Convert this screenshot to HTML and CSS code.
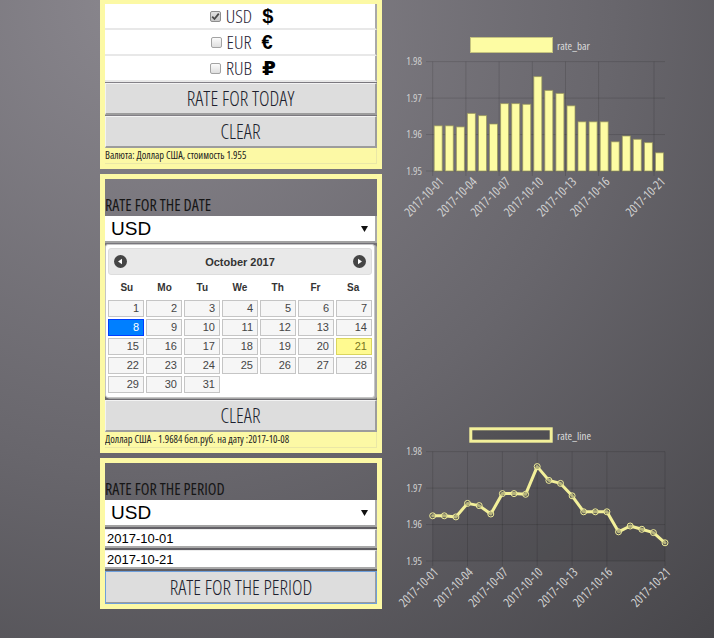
FILE: index.html
```html
<!DOCTYPE html>
<html lang="ru">
<head>
<meta charset="utf-8">
<title>Rates</title>
<link rel="stylesheet" href="styles.css">
</head>
<body>
<div class="page">
  <div class="left">
    <section class="panel panel-today">
      <div class="cur-row">
        <span class="cb cb-checked"><svg viewBox="0 0 11 11" width="11" height="11"><path d="M2.2 5.6 L4.5 8 L8.8 2.6" fill="none" stroke="#4a4a4a" stroke-width="1.8"/></svg></span>
        <span class="cur-code">USD</span><span class="cur-sym">$</span>
      </div>
      <div class="cur-row">
        <span class="cb"></span>
        <span class="cur-code">EUR</span><span class="cur-sym">€</span>
      </div>
      <div class="cur-row">
        <span class="cb"></span>
        <span class="cur-code">RUB</span><span class="cur-sym">₽</span>
      </div>
      <button class="btn">RATE FOR TODAY</button>
      <button class="btn">CLEAR</button>
      <div class="info">Валюта: Доллар США, стоимость 1.955</div>
    </section>

    <section class="panel">
      <div class="panel-title">RATE FOR THE DATE</div>
      <div class="select"><span>USD</span><svg class="caret" viewBox="0 0 7 6" width="7" height="6"><path d="M0 0 H7 L3.5 6 Z" fill="#111"/></svg></div>
      <div class="dp">
        <div class="dp-head">
          <svg class="dp-nav" viewBox="0 0 13 13" width="13" height="13"><circle cx="6.5" cy="6.5" r="6.5" fill="#454545"/><path d="M4 6.5 L8 3.8 V9.2 Z" fill="#fff"/></svg>
          <span class="dp-title">October 2017</span>
          <svg class="dp-nav" viewBox="0 0 13 13" width="13" height="13"><circle cx="6.5" cy="6.5" r="6.5" fill="#454545"/><path d="M9 6.5 L5 3.8 V9.2 Z" fill="#fff"/></svg>
        </div>
        <div class="dp-days"><span>Su</span><span>Mo</span><span>Tu</span><span>We</span><span>Th</span><span>Fr</span><span>Sa</span></div>
        <div class="dp-grid">
          <span class="dp-cell">1</span><span class="dp-cell">2</span><span class="dp-cell">3</span><span class="dp-cell">4</span><span class="dp-cell">5</span><span class="dp-cell">6</span><span class="dp-cell">7</span>
          <span class="dp-cell dp-active">8</span><span class="dp-cell">9</span><span class="dp-cell">10</span><span class="dp-cell">11</span><span class="dp-cell">12</span><span class="dp-cell">13</span><span class="dp-cell">14</span>
          <span class="dp-cell">15</span><span class="dp-cell">16</span><span class="dp-cell">17</span><span class="dp-cell">18</span><span class="dp-cell">19</span><span class="dp-cell">20</span><span class="dp-cell dp-today">21</span>
          <span class="dp-cell">22</span><span class="dp-cell">23</span><span class="dp-cell">24</span><span class="dp-cell">25</span><span class="dp-cell">26</span><span class="dp-cell">27</span><span class="dp-cell">28</span>
          <span class="dp-cell">29</span><span class="dp-cell">30</span><span class="dp-cell">31</span>
        </div>
      </div>
      <button class="btn btn-clear2">CLEAR</button>
      <div class="info">Доллар США - 1.9684 бел.руб. на дату :2017-10-08</div>
    </section>

    <section class="panel">
      <div class="panel-title">RATE FOR THE PERIOD</div>
      <div class="select"><span>USD</span><svg class="caret" viewBox="0 0 7 6" width="7" height="6"><path d="M0 0 H7 L3.5 6 Z" fill="#111"/></svg></div>
      <input class="date-input" type="text" value="2017-10-01">
      <input class="date-input" type="text" value="2017-10-21">
      <button class="btn btn-focus">RATE FOR THE PERIOD</button>
    </section>
  </div>

  <div class="charts">
    <svg class="chart" width="300" height="200" viewBox="390 30 300 200">
      <rect x="470.5" y="37.5" width="82" height="15" class="bar-legend"/>
      <text x="557" y="49.5" class="legend-text">rate_bar</text>
      <g class="grid">
        <line x1="426" y1="61.65" x2="665" y2="61.65"/>
        <line x1="426" y1="98.1" x2="665" y2="98.1"/>
        <line x1="426" y1="134.55" x2="665" y2="134.55"/>
        <line x1="426" y1="171" x2="665" y2="171"/>
        <line x1="432.7" y1="61.65" x2="432.7" y2="176"/>
        <line x1="465.9" y1="61.65" x2="465.9" y2="176"/>
        <line x1="499.1" y1="61.65" x2="499.1" y2="176"/>
        <line x1="532.3" y1="61.65" x2="532.3" y2="176"/>
        <line x1="565.5" y1="61.65" x2="565.5" y2="176"/>
        <line x1="598.6" y1="61.65" x2="598.6" y2="176"/>
        <line x1="654" y1="61.65" x2="654" y2="176"/>
      </g>
      <g class="ylabels">
        <text x="422" y="65.3">1.98</text>
        <text x="422" y="101.8">1.97</text>
        <text x="422" y="138.2">1.96</text>
        <text x="422" y="174.7">1.95</text>
      </g>
      <g class="bars">
        <rect x="434.2" y="125.8" width="8" height="45.2"/>
        <rect x="445.3" y="125.8" width="8" height="45.2"/>
        <rect x="456.4" y="126.9" width="8" height="44.1"/>
        <rect x="467.4" y="113.4" width="8" height="57.6"/>
        <rect x="478.5" y="115.6" width="8" height="55.4"/>
        <rect x="489.5" y="124" width="8" height="47"/>
        <rect x="500.6" y="103.6" width="8" height="67.4"/>
        <rect x="511.7" y="103.6" width="8" height="67.4"/>
        <rect x="522.7" y="104.3" width="8" height="66.7"/>
        <rect x="533.8" y="76.6" width="8" height="94.4"/>
        <rect x="544.8" y="90.4" width="8" height="80.6"/>
        <rect x="555.9" y="93.4" width="8" height="77.6"/>
        <rect x="567" y="105.8" width="8" height="65.2"/>
        <rect x="578" y="121.8" width="8" height="49.2"/>
        <rect x="589.1" y="121.8" width="8" height="49.2"/>
        <rect x="600.2" y="121.8" width="8" height="49.2"/>
        <rect x="611.2" y="141.8" width="8" height="29.2"/>
        <rect x="622.3" y="136" width="8" height="35"/>
        <rect x="633.3" y="139.3" width="8" height="31.7"/>
        <rect x="644.4" y="142.6" width="8" height="28.4"/>
        <rect x="655.5" y="152.8" width="8" height="18.2"/>
      </g>
      <g class="xlabels">
        <text transform="translate(442.2 180) rotate(-45)">2017-10-01</text>
        <text transform="translate(475.4 180) rotate(-45)">2017-10-04</text>
        <text transform="translate(508.6 180) rotate(-45)">2017-10-07</text>
        <text transform="translate(541.8 180) rotate(-45)">2017-10-10</text>
        <text transform="translate(574.9 180) rotate(-45)">2017-10-13</text>
        <text transform="translate(608.1 180) rotate(-45)">2017-10-16</text>
        <text transform="translate(663.6 180) rotate(-45)">2017-10-21</text>
      </g>
    </svg>

    <svg class="chart" width="300" height="200" viewBox="390 420 300 200">
      <rect x="470.8" y="428.8" width="80.4" height="12.4" class="line-legend"/>
      <text x="557" y="439.5" class="legend-text">rate_line</text>
      <g class="grid">
        <line x1="426" y1="451.65" x2="665" y2="451.65"/>
        <line x1="426" y1="488.1" x2="665" y2="488.1"/>
        <line x1="426" y1="524.55" x2="665" y2="524.55"/>
        <line x1="426" y1="561" x2="665" y2="561"/>
        <line x1="432.7" y1="451.65" x2="432.7" y2="566"/>
        <line x1="467.5" y1="451.65" x2="467.5" y2="566"/>
        <line x1="502.4" y1="451.65" x2="502.4" y2="566"/>
        <line x1="537.2" y1="451.65" x2="537.2" y2="566"/>
        <line x1="572.1" y1="451.65" x2="572.1" y2="566"/>
        <line x1="606.9" y1="451.65" x2="606.9" y2="566"/>
        <line x1="665" y1="451.65" x2="665" y2="566"/>
      </g>
      <g class="ylabels">
        <text x="422" y="455.3">1.98</text>
        <text x="422" y="491.8">1.97</text>
        <text x="422" y="528.2">1.96</text>
        <text x="422" y="564.7">1.95</text>
      </g>
      <polygon class="line-fill" points="432.7,515.8 444.3,515.8 455.9,516.9 467.5,503.4 479.2,505.6 490.8,514 502.4,493.6 514,493.6 525.6,494.3 537.2,466.6 548.9,480.4 560.5,483.4 572.1,495.8 583.7,511.8 595.3,511.8 606.9,511.8 618.5,531.8 630.2,526 641.8,529.3 653.4,532.6 665,542.8 665,561 432.7,561"/>
      <polyline class="line" points="432.7,515.8 444.3,515.8 455.9,516.9 467.5,503.4 479.2,505.6 490.8,514 502.4,493.6 514,493.6 525.6,494.3 537.2,466.6 548.9,480.4 560.5,483.4 572.1,495.8 583.7,511.8 595.3,511.8 606.9,511.8 618.5,531.8 630.2,526 641.8,529.3 653.4,532.6 665,542.8"/>
      <g class="points">
        <circle cx="432.7" cy="515.8" r="3"/><circle cx="444.3" cy="515.8" r="3"/><circle cx="455.9" cy="516.9" r="3"/>
        <circle cx="467.5" cy="503.4" r="3"/><circle cx="479.2" cy="505.6" r="3"/><circle cx="490.8" cy="514" r="3"/>
        <circle cx="502.4" cy="493.6" r="3"/><circle cx="514" cy="493.6" r="3"/><circle cx="525.6" cy="494.3" r="3"/>
        <circle cx="537.2" cy="466.6" r="3"/><circle cx="548.9" cy="480.4" r="3"/><circle cx="560.5" cy="483.4" r="3"/>
        <circle cx="572.1" cy="495.8" r="3"/><circle cx="583.7" cy="511.8" r="3"/><circle cx="595.3" cy="511.8" r="3"/>
        <circle cx="606.9" cy="511.8" r="3"/><circle cx="618.5" cy="531.8" r="3"/><circle cx="630.2" cy="526" r="3"/>
        <circle cx="641.8" cy="529.3" r="3"/><circle cx="653.4" cy="532.6" r="3"/><circle cx="665" cy="542.8" r="3"/>
      </g>
      <g class="xlabels">
        <text transform="translate(436.7 570.5) rotate(-45)">2017-10-01</text>
        <text transform="translate(471.5 570.5) rotate(-45)">2017-10-04</text>
        <text transform="translate(506.4 570.5) rotate(-45)">2017-10-07</text>
        <text transform="translate(541.2 570.5) rotate(-45)">2017-10-10</text>
        <text transform="translate(576.1 570.5) rotate(-45)">2017-10-13</text>
        <text transform="translate(610.9 570.5) rotate(-45)">2017-10-16</text>
        <text transform="translate(669 570.5) rotate(-45)">2017-10-21</text>
      </g>
    </svg>
  </div>
</div>
</body>
</html>
```

FILE: styles.css
```css
html {
  background: #5e5c62;
}
body {
  margin: 0;
  min-height: 638px;
  background: radial-gradient(circle farthest-corner at 20% 0%, #8a878e 0%, #68666c 55%, #47464a 100%);
  font-family: "Open Sans", "DejaVu Sans", sans-serif;
  overflow: hidden;
}
.page {
  display: flex;
  padding-left: 100px;
}
.left {
  width: 282px;
  display: flex;
  flex-direction: column;
  gap: 5px;
  margin-top: -1px;
}
.panel {
  border: 5px solid #fcf9a5;
  display: flex;
  flex-direction: column;
}
.cur-row {
  height: 24px;
  background: #fff;
  border-right: 2px solid #a9a9a9;
  border-bottom: 2px solid #e8e8e8;
  display: flex;
  align-items: center;
  justify-content: center;
  padding-left: 6px;
}
.cb {
  width: 11px;
  height: 11px;
  box-sizing: border-box;
  border: 1px solid #a3a3a3;
  border-radius: 2px;
  background: linear-gradient(#fbfbfb, #dedede);
  margin-right: 5px;
  display: flex;
  align-items: center;
  justify-content: center;
}
.cb svg {
  margin: -1px;
}
.cb-checked {
  background: linear-gradient(#e2e2e2, #c8c8c8);
  border-color: #8e8e8e;
}
.cur-code,
.btn,
.panel-title,
.info {
  font-family: "Open Sans", sans-serif;
  font-stretch: 75%;
  font-weight: 300;
}
.cur-code {
  font-size: 19px;
  color: #1f2333;
  line-height: 24px;
}
.cur-sym {
  font-family: "Liberation Sans", "DejaVu Sans", sans-serif;
  font-weight: bold;
  font-size: 20px;
  margin-left: 10px;
  color: #000;
  width: 14px;
  line-height: 24px;
}
.btn {
  display: block;
  width: 100%;
  height: 32px;
  padding: 0;
  margin: 1px 0 0;
  background: #dddddd;
  border-top: 1px solid #f3f3f3;
  border-left: 1px solid #f3f3f3;
  border-right: 2px solid #9c9c9c;
  border-bottom: 2px solid #9c9c9c;
  font-size: 20px;
  color: #1d1f2e;
}
.btn-clear2 {
  margin-top: 2px;
}
.btn-focus {
  height: 33px;
  margin-top: 2px;
  border: 1px solid #6e9fdb;
  box-shadow: inset -1px -1px 0 #9c9c9c;
}
.info {
  height: 15px;
  line-height: 15px;
  font-size: 10.4px;
  font-weight: 400;
  color: #222;
  background: #fcf9a5;
  border-right: 1px solid #eae7a6;
  border-bottom: 1px solid #eae7a6;
  white-space: nowrap;
  overflow: hidden;
}
.panel-title {
  height: 37px;
  display: flex;
  align-items: flex-end;
  font-size: 16px;
  font-weight: 400;
  color: #161616;
  line-height: 20px;
  padding-bottom: 1px;
  box-sizing: border-box;
}
.select {
  height: 27px;
  box-sizing: border-box;
  background: #fff;
  border-right: 2px solid #a9a9a9;
  border-bottom: 2px solid #a2a2a2;
  display: flex;
  align-items: center;
  justify-content: space-between;
  padding: 0 7px 0 6px;
  font-family: "Liberation Sans", Arial, sans-serif;
  font-size: 19px;
  color: #000;
}
.caret {
  display: block;
}
.date-input {
  display: block;
  width: 100%;
  height: 19px;
  box-sizing: border-box;
  margin: 2px 0 0;
  padding: 0 0 0 2px;
  background: #fff;
  border: none;
  border-top: 1px solid #ececec;
  border-right: 2px solid #a9a9a9;
  border-bottom: 2px solid #a9a9a9;
  font-family: "Liberation Sans", Arial, sans-serif;
  font-size: 13px;
  color: #000;
  outline: none;
}
.dp {
  margin-top: 1px;
  width: 270px;
  box-sizing: border-box;
  padding: 3px 2px 4px;
  background: #fff;
  border: 1px solid #c5c5c5;
  border-radius: 3px;
  box-shadow: 2px 1px 0 #a5a5a5;
  font-family: "Liberation Sans", Arial, sans-serif;
}
.dp-head {
  height: 27px;
  box-sizing: border-box;
  background: #e9e9e9;
  border: 1px solid #dddddd;
  border-radius: 3px;
  display: flex;
  align-items: center;
  justify-content: space-between;
  padding: 0 5px;
}
.dp-nav {
  display: block;
}
.dp-title {
  font-size: 11px;
  font-weight: bold;
  color: #333;
}
.dp-days {
  height: 25px;
  display: grid;
  grid-template-columns: repeat(7, 1fr);
  align-items: center;
  text-align: center;
  font-size: 10px;
  font-weight: bold;
  color: #333;
}
.dp-grid {
  display: grid;
  grid-template-columns: repeat(7, 1fr);
  gap: 2px;
}
.dp-cell {
  height: 17px;
  box-sizing: border-box;
  border: 1px solid #c5c5c5;
  background: #f6f6f6;
  color: #454545;
  font-size: 11px;
  line-height: 15px;
  text-align: right;
  padding-right: 4px;
}
.dp-active {
  background: #007fff;
  border-color: #003eff;
  color: #fff;
}
.dp-today {
  background: #fffa90;
  border-color: #dad55e;
  color: #777620;
}
.charts {
  margin-left: 8px;
  padding-top: 30px;
  display: flex;
  flex-direction: column;
  gap: 190px;
}
.chart {
  display: block;
}
.chart text {
  font-family: "Open Sans", sans-serif;
  font-stretch: 75%;
}
.grid line {
  stroke: rgba(0, 0, 0, 0.13);
  stroke-width: 1;
}
.ylabels text {
  font-size: 10.5px;
  fill: #cfcfcf;
  text-anchor: end;
}
.xlabels text {
  font-size: 12.5px;
  fill: #d2d2d2;
  text-anchor: end;
  dominant-baseline: middle;
}
.legend-text {
  font-size: 11px;
  fill: #dcdcdc;
}
.bar-legend {
  fill: #fdfca3;
  stroke: #c4c27f;
  stroke-width: 1;
}
.bars rect {
  fill: #fdfca3;
  stroke: rgba(150, 148, 90, 0.7);
  stroke-width: 1;
}
.line-legend {
  fill: rgba(0, 0, 0, 0.14);
  stroke: #f3f09a;
  stroke-width: 3;
}
.line-fill {
  fill: rgba(0, 0, 0, 0.07);
}
.line {
  fill: none;
  stroke: #f3f09a;
  stroke-width: 3;
  stroke-linejoin: round;
  stroke-linecap: round;
}
.points circle {
  fill: rgba(70, 70, 70, 0.35);
  stroke: #f3f09a;
  stroke-width: 1;
}
```
